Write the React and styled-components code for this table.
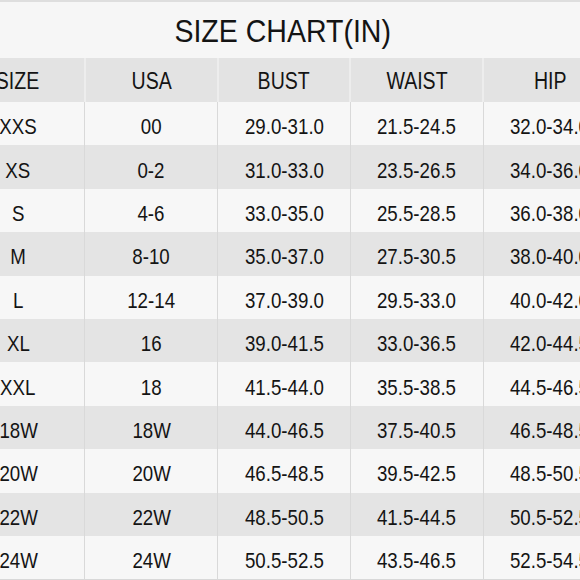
import React from "react";
import styled, { createGlobalStyle } from "styled-components";

const GlobalStyle = createGlobalStyle`
  html, body {
    margin: 0;
    padding: 0;
    background: #f6f6f6;
    overflow: hidden;
  }
  body {
    font-family: "Liberation Sans", Arial, sans-serif;
    color: #141414;
  }
`;

const Page = styled.div`
  width: 580px;
  height: 580px;
  overflow: hidden;
  border-top: 2px solid #dedede;
  box-sizing: border-box;
`;

const TitleBar = styled.div`
  height: 56px;
  display: flex;
  align-items: center;
  justify-content: center;
  padding-right: 14px;
  box-sizing: border-box;
`;

const Title = styled.h1`
  margin: 0;
  font-size: 31px;
  font-weight: 400;
  transform: scaleX(0.92);
  white-space: nowrap;
  padding-top: 4px;
`;

const Chart = styled.table`
  margin-left: -48px;
  width: 664px;
  table-layout: fixed;
  border-collapse: collapse;
  border-bottom: 1px solid #d8d8d8;
`;

const HeadCell = styled.th`
  height: 42px;
  padding: 2px 0 0;
  background: #e3e3e3;
  font-weight: 400;
  font-size: 23px;
  text-align: center;
  border-left: 2px solid #ededed;
  &:first-child { border-left: none; }
`;

const Cell = styled.td`
  height: 43.4px;
  padding: 7px 0 0;
  box-sizing: border-box;
  background: ${(p) => (p.$shaded ? "#e4e4e4" : "#f7f7f7")};
  font-size: 22px;
  text-align: center;
  border-left: 1px solid #d9d9d9;
  &:first-child { border-left: none; }
`;

const Squeezed = styled.span`
  display: inline-block;
  white-space: nowrap;
  transform: scaleX(${(p) => p.$x || 0.85});
`;

const columns = ["SIZE", "USA", "BUST", "WAIST", "HIP"];

const rows = [
  ["XXS", "00", "29.0-31.0", "21.5-24.5", "32.0-34.0"],
  ["XS", "0-2", "31.0-33.0", "23.5-26.5", "34.0-36.0"],
  ["S", "4-6", "33.0-35.0", "25.5-28.5", "36.0-38.0"],
  ["M", "8-10", "35.0-37.0", "27.5-30.5", "38.0-40.0"],
  ["L", "12-14", "37.0-39.0", "29.5-33.0", "40.0-42.0"],
  ["XL", "16", "39.0-41.5", "33.0-36.5", "42.0-44.5"],
  ["XXL", "18", "41.5-44.0", "35.5-38.5", "44.5-46.5"],
  ["18W", "18W", "44.0-46.5", "37.5-40.5", "46.5-48.5"],
  ["20W", "20W", "46.5-48.5", "39.5-42.5", "48.5-50.5"],
  ["22W", "22W", "48.5-50.5", "41.5-44.5", "50.5-52.5"],
  ["24W", "24W", "50.5-52.5", "43.5-46.5", "52.5-54.5"],
];

export default function App() {
  return (
    <Page>
      <GlobalStyle />
      <TitleBar>
        <Title>SIZE CHART(IN)</Title>
      </TitleBar>
      <Chart>
        <thead>
          <tr>
            {columns.map((c) => (
              <HeadCell key={c}>
                <Squeezed>{c}</Squeezed>
              </HeadCell>
            ))}
          </tr>
        </thead>
        <tbody>
          {rows.map((r, i) => (
            <tr key={r[0]}>
              {r.map((v, j) => (
                <Cell key={j} $shaded={i % 2 === 1}>
                  <Squeezed>{v}</Squeezed>
                </Cell>
              ))}
            </tr>
          ))}
        </tbody>
      </Chart>
    </Page>
  );
}
